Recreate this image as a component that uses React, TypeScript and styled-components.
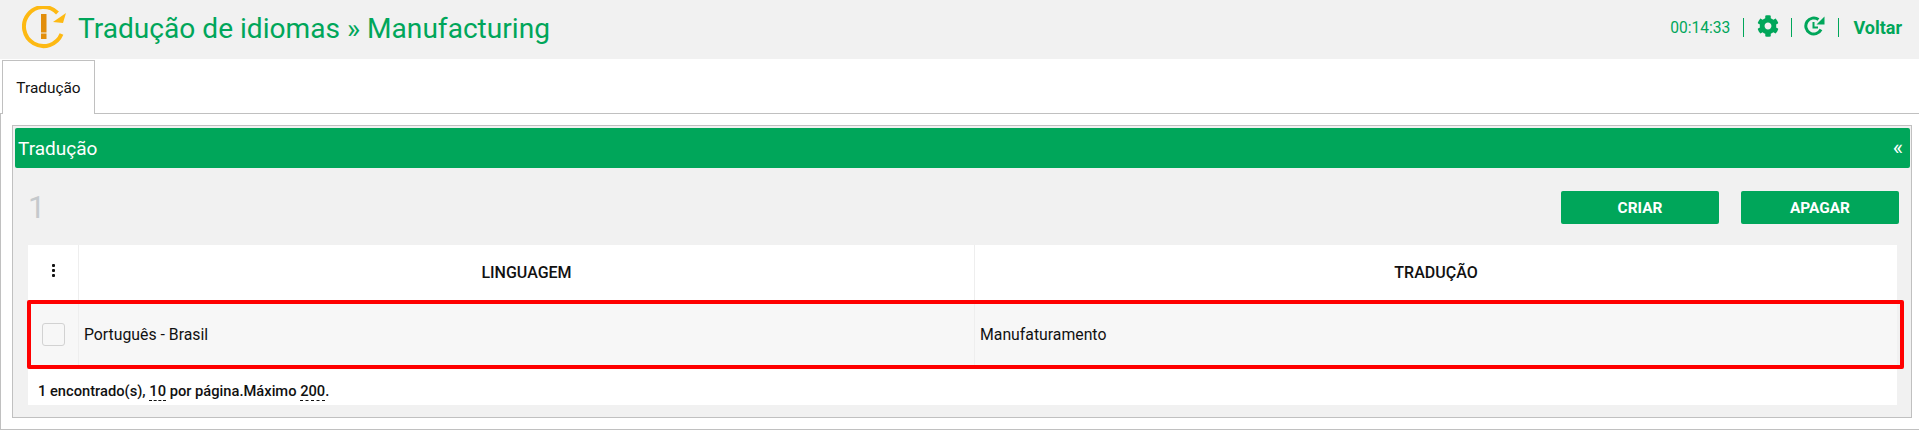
import React from 'react'
import styled, { createGlobalStyle } from 'styled-components'
import { FaCog } from 'react-icons/fa'

const GREEN = '#00a65a'

const Global = createGlobalStyle`
  html, body { margin: 0; padding: 0; background: #fff; }
  body { font-family: Roboto, "Liberation Sans", sans-serif; color: #111; overflow: hidden; }
  * { box-sizing: border-box; }
`

const Header = styled.header`
  height: 59px;
  background: #f1f1f1;
  display: flex;
  align-items: center;
  justify-content: space-between;
  padding: 0 17px 0 22px;
`
const TitleGroup = styled.div`
  display: flex;
  align-items: center;
  gap: 10px;
  margin-top: -1px;
`
const Title = styled.h1`
  margin: 0;
  font-size: 28.1px;
  font-weight: 400;
  line-height: 1;
  color: ${GREEN};
`
const Tools = styled.div`
  display: flex;
  align-items: center;
  color: ${GREEN};
  font-size: 15.6px;
  height: 20px;
  margin-top: -4px;
`
const ToolIcon = styled.span`
  display: flex;
  margin-bottom: 3px;
`
const Divider = styled.span<{ $left?: number; $right?: number }>`
  width: 1px;
  height: 19px;
  background: ${GREEN};
  margin: 0 ${(p) => p.$right ?? 13}px 0 ${(p) => p.$left ?? 13}px;
`
const Voltar = styled.span`
  font-size: 18px;
  font-weight: 700;
`
const TabBar = styled.nav`
  height: 55px;
  padding: 1px 0 0 2px;
  border-bottom: 1px solid #c0c0c0;
  background: #fff;
`
const Tab = styled.div`
  width: 93px;
  height: 54px;
  border: 1px solid #c0c0c0;
  border-bottom: none;
  background: #fff;
  font-size: 15.4px;
  display: flex;
  align-items: center;
  justify-content: center;
`
const Outer = styled.main`
  height: 316px;
  padding: 11px 7px 11px 11px;
  border-left: 1px solid #c0c0c0;
  border-bottom: 1px solid #c0c0c0;
`
const Panel = styled.section`
  height: 293px;
  border: 1px solid #c0c0c0;
  background: #f1f1f1;
  padding: 2px 1px 0 0;
`
const PanelBar = styled.div`
  height: 40px;
  margin-left: 2px;
  background: ${GREEN};
  border-radius: 2px;
  color: #fff;
  display: flex;
  align-items: center;
  justify-content: space-between;
  padding: 0 7px 0 3px;
  font-size: 19px;
`
const Chevrons = styled.span`
  font-size: 22px;
  line-height: 1;
`
const ActionRow = styled.div`
  height: 77px;
  display: flex;
  align-items: flex-start;
  justify-content: space-between;
  padding: 23px 11px 0 15px;
`
const Count = styled.span`
  font-size: 31px;
  line-height: 33px;
  color: #c5c9cc;
`
const Actions = styled.div`
  display: flex;
  gap: 22px;
`
const ActionButton = styled.button`
  width: 158px;
  height: 33px;
  border: none;
  border-radius: 2px;
  background: ${GREEN};
  color: #fff;
  font-family: inherit;
  font-size: 15.4px;
  font-weight: 700;
`
const TableWrap = styled.div`
  margin: 0 13px 0 15px;
  height: 160px;
  background: #fff;
  position: relative;
`
const GridRow = styled.div<{ $height: number; $muted?: boolean }>`
  display: grid;
  grid-template-columns: 51px 896px 1fr;
  height: ${(p) => p.$height}px;
  background: ${(p) => (p.$muted ? '#f7f7f7' : '#fff')};
`
const Cell = styled.div<{ $center?: boolean; $head?: boolean }>`
  display: flex;
  align-items: center;
  justify-content: ${(p) => (p.$center ? 'center' : 'flex-start')};
  padding: ${(p) => (p.$center ? '0' : '0 5px')};
  padding-bottom: ${(p) => (p.$head ? '5px' : '0')};
  font-size: ${(p) => (p.$head ? '16px' : '15.8px')};
  font-weight: ${(p) => (p.$head ? 500 : 400)};
  border-right: 1px solid #eeeeee;
  &:last-child { border-right: none; }
`
const Checkbox = styled.span`
  width: 23px;
  height: 23px;
  margin-left: 1px;
  border: 1px solid #d2d2d2;
  border-radius: 3px;
  background: #f7f7f7;
`
const Kebab = styled.span`
  display: flex;
  flex-direction: column;
  gap: 2px;
  margin: 0 0 3px 1px;
  i { width: 3px; height: 3px; background: #111; display: block; border-radius: 1px; }
`
const Highlight = styled.div`
  position: absolute;
  left: -1px;
  top: 55px;
  right: -7px;
  height: 69px;
  border: 4px solid #ff0000;
  border-radius: 2px;
  pointer-events: none;
`
const Footer = styled.div`
  height: 40px;
  padding: 17px 0 0 10px;
  font-size: 14.7px;
  font-weight: 500;
`
const Dotted = styled.span`
  border-bottom: 1px dashed #111;
`

const Logo = () => (
  <svg width="46" height="46" viewBox="0 0 46 46" fill="none">
    <path d="M39.500 28A19.500 19.500 0 1 1 35.500 7" stroke="#fdb913" strokeWidth="4" />
    <path d="M44 7L31 16l10 1z" fill="#fdb913" />
    <rect x="19" y="8" width="5.500" height="18.500" fill="#e28e0b" />
    <rect x="19" y="27.500" width="5.500" height="5.500" fill="#e28e0b" />
  </svg>
)

const HistoryIcon = () => (
  <svg width="21" height="20" viewBox="0 0 21 20" fill="none">
    <path d="M17 13.500A8 8 0 1 1 14.500 3.500" stroke={GREEN} strokeWidth="3" />
    <path d="M20.500 0.500V8.500H12.500z" fill={GREEN} />
    <path d="M9.500 6v5.500H14" stroke={GREEN} strokeWidth="2" />
  </svg>
)

export default function App() {
  return (
    <>
      <Global />
      <Header>
        <TitleGroup>
          <Logo />
          <Title>Tradução de idiomas » Manufacturing</Title>
        </TitleGroup>
        <Tools>
          <span>00:14:33</span>
          <Divider $left={13} $right={13} />
          <ToolIcon>
            <FaCog size={22} />
          </ToolIcon>
          <Divider $left={12} $right={12} />
          <ToolIcon>
            <HistoryIcon />
          </ToolIcon>
          <Divider $right={14} />
          <Voltar>Voltar</Voltar>
        </Tools>
      </Header>
      <TabBar>
        <Tab>Tradução</Tab>
      </TabBar>
      <Outer>
        <Panel>
          <PanelBar>
            <span>Tradução</span>
            <Chevrons>«</Chevrons>
          </PanelBar>
          <ActionRow>
            <Count>1</Count>
            <Actions>
              <ActionButton>CRIAR</ActionButton>
              <ActionButton>APAGAR</ActionButton>
            </Actions>
          </ActionRow>
          <TableWrap>
            <GridRow $height={59}>
              <Cell $center $head>
                <Kebab>
                  <i />
                  <i />
                  <i />
                </Kebab>
              </Cell>
              <Cell $center $head>LINGUAGEM</Cell>
              <Cell $center $head>TRADUÇÃO</Cell>
            </GridRow>
            <GridRow $height={61} $muted>
              <Cell $center>
                <Checkbox />
              </Cell>
              <Cell>Português - Brasil</Cell>
              <Cell>Manufaturamento</Cell>
            </GridRow>
            <Footer>
              1 encontrado(s), <Dotted>10</Dotted> por página.Máximo <Dotted>200</Dotted>.
            </Footer>
            <Highlight />
          </TableWrap>
        </Panel>
      </Outer>
    </>
  )
}
